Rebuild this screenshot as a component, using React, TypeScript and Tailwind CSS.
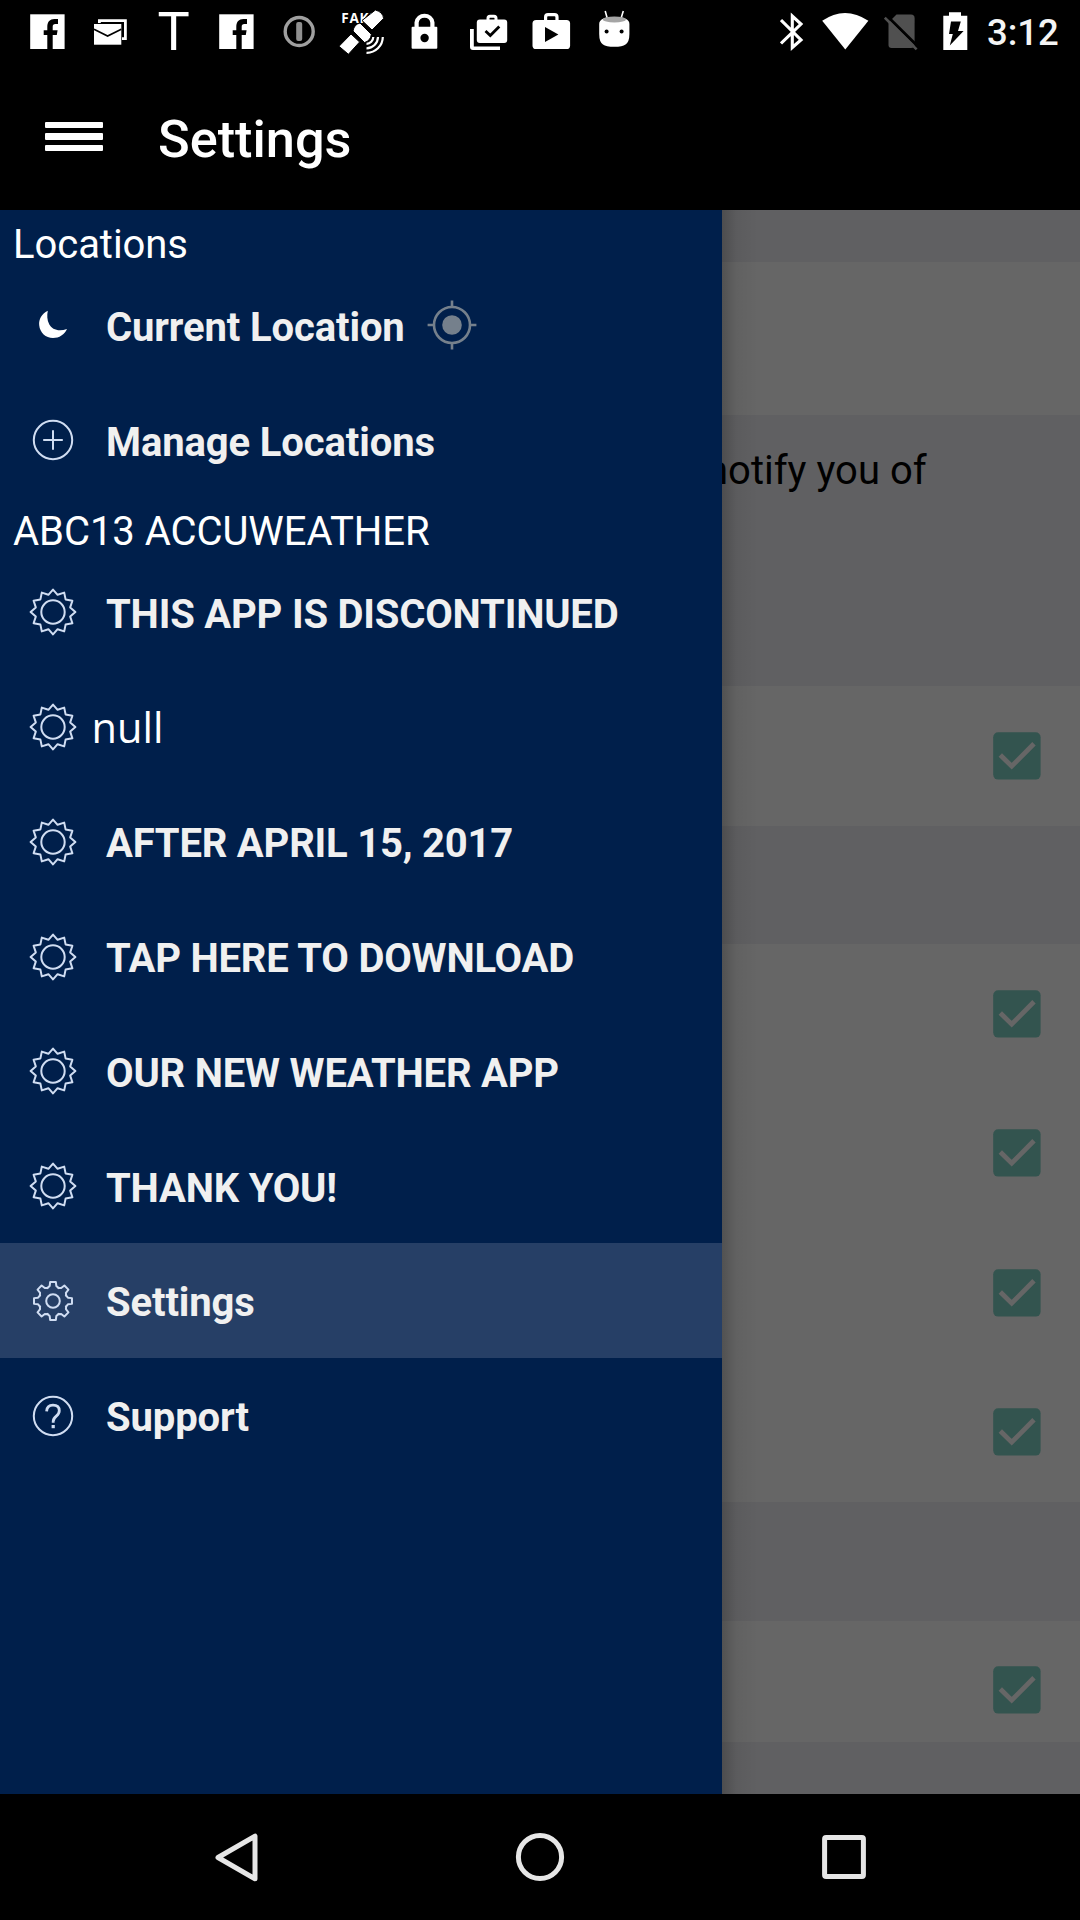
import React from "react";

type IconProps = { children: React.ReactNode; width?: number; className?: string };

function StatusIcon({ children, width = 63, className = "" }: IconProps) {
  return (
    <svg width={width} height={64} viewBox={`0 0 ${width} 64`} fill="white" className={`shrink-0 ${className}`}>
      {children}
    </svg>
  );
}

function FacebookIcon() {
  return (
    <StatusIcon>
      <rect x="14.2" y="14.3" width="34.4" height="34.7" />
      <path
        d="M31.3 49V34.9H27.7V30.2H31.3V26.6C31.3 21.8 34 19 38.3 19H42V24H39.4C37.4 24 36.7 25 36.7 26.8V30.2H41.6L40.8 34.9H36.7V49Z"
        fill="black"
      />
    </StatusIcon>
  );
}

function StatusBar() {
  return (
    <div className="flex h-16 items-start pl-4">
      <FacebookIcon />
      <StatusIcon>
        <path d="M20.4 23V20.6H46.4V38.6H43" fill="none" stroke="white" strokeWidth="2.8" />
        <rect x="15" y="24" width="27.3" height="20.7" />
        <path d="M15 29.2L28.6 36L42.3 29.2" fill="none" stroke="black" strokeWidth="1.6" />
      </StatusIcon>
      <div className="h-16 w-[63px] text-center font-[Roboto] text-[54px] leading-[63px] text-white">T</div>
      <FacebookIcon />
      <StatusIcon>
        <circle cx="31.2" cy="31.5" r="14" fill="none" stroke="#a0a0a0" strokeWidth="3.4" />
        <rect x="28.2" y="22" width="6" height="19" rx="2" fill="#909090" />
      </StatusIcon>
      <StatusIcon>
        <text x="10.2" y="22.8" fontFamily="Open Sans" fontWeight="700" fontSize="13.5" letterSpacing="0.8">FAKE</text>
        <g stroke="black" strokeWidth="1">
          <path d="M8 46.3L20 34L28.6 42L17.4 54.3Z" />
          <path d="M31 20.5L44.4 10Q52 12 52.6 18.5L41 30Z" />
          <path d="M22 31Q23 24.5 29 23L40.3 34.3Q39.8 40.5 33.5 42.6Z" />
        </g>
        <g fill="none" stroke="white" strokeWidth="2.2">
          <path d="M35.5 43.8A7 7 0 0 0 42.3 37" />
          <path d="M35.5 48.3A11.5 11.5 0 0 0 47 37" />
          <path d="M35.5 52.8A16 16 0 0 0 51.8 37" />
        </g>
      </StatusIcon>
      <StatusIcon>
        <path d="M22.6 28V22.5A8 8 0 0 1 38.4 22.5V28" fill="none" stroke="white" strokeWidth="4.2" />
        <rect x="17.6" y="26.8" width="25.7" height="22" rx="1" />
        <circle cx="30.6" cy="38" r="4.2" fill="black" />
      </StatusIcon>
      <StatusIcon>
        <path d="M13 29H16.8V46.5H43V50H16Q13 50 13 47Z" />
        <rect x="19.8" y="19.6" width="30.4" height="23.4" rx="3" />
        <path d="M31 20V18.2Q31 16.2 33 16.2H37Q39 16.2 39 18.2V20" fill="none" stroke="white" strokeWidth="3" />
        <path d="M28.5 31L33.3 35.5L42.3 26.4" fill="none" stroke="black" strokeWidth="2.8" />
      </StatusIcon>
      <StatusIcon>
        <rect x="12.5" y="20" width="37.6" height="29" rx="3.6" />
        <path d="M25.6 21V17Q25.6 14.6 28 14.6H34.5Q37 14.6 37 17V21" fill="none" stroke="white" strokeWidth="3.2" />
        <path d="M25 27V42L38.4 34.5Z" fill="black" />
      </StatusIcon>
      <StatusIcon>
        <path d="M22.2 11L24.3 18.5M40.3 11L38 18.5" stroke="white" strokeWidth="1.6" />
        <path d="M16.2 24Q16.2 17 31.3 17Q46.4 17 46.4 24V34Q46.4 42 42.5 44.5Q39.5 46.8 31.3 46.8Q23 46.8 20 44.5Q16.2 42 16.2 34Z" />
        <ellipse cx="31.4" cy="19.4" rx="11.6" ry="3" fill="#a5a5a5" />
        <circle cx="23.6" cy="31.6" r="2" fill="black" />
        <circle cx="38.6" cy="31.6" r="2" fill="black" />
      </StatusIcon>
      <StatusIcon width={25} className="ml-[134px]">
        <path d="M1 20L21 40L12.3 47.5V16L21 24L1 43.5" fill="none" stroke="white" strokeWidth="3.1" />
      </StatusIcon>
      <StatusIcon width={48} className="ml-[16px]">
        <path d="M1.2 20.8Q23.8 5.2 47.4 20.8L24.3 49.6Z" />
      </StatusIcon>
      <StatusIcon width={35} className="ml-[15px]">
        <path d="M12.5 14.5H27Q30.6 14.5 30.6 18V45Q30.6 48 27 48H7.6Q4.5 48 4.5 45V22.5Z" fill="#505050" />
        <path d="M2.5 15.5L34 46.5" stroke="black" strokeWidth="3" />
        <path d="M.8 17.6L32.6 49.3" stroke="#505050" strokeWidth="2.6" />
      </StatusIcon>
      <StatusIcon width={26} className="ml-[24px]">
        <path d="M.3 15.7H6V12.2H18V15.7H24.3V50H.3Z" />
        <path d="M8 21.5H17.8L15 31H20.6L6.8 45.5L9.8 34H6Z" fill="black" />
      </StatusIcon>
      <div className="ml-[18px] font-[Roboto] text-[36.5px] leading-[66px] font-medium text-[#f4f4f4]">3:12</div>
    </div>
  );
}

function AppBar() {
  return (
    <div className="flex h-[146px] items-center pl-[45px]">
      <div className="-mt-px flex w-[58px] flex-col gap-[5.5px]">
        <div className="h-[6.3px] rounded-[1px] bg-white" />
        <div className="h-[6.3px] rounded-[1px] bg-white" />
        <div className="h-[6.3px] rounded-[1px] bg-white" />
      </div>
      <div className="mt-[4px] ml-[55px] text-[52.3px] leading-none font-medium text-white">Settings</div>
    </div>
  );
}

const sunPoints = Array.from({ length: 24 }, (_, i) => {
  const r = i % 2 === 0 ? 22.4 : 17.8;
  const a = (i * Math.PI) / 12;
  return `${(26 + r * Math.sin(a)).toFixed(2)},${(26 - r * Math.cos(a)).toFixed(2)}`;
}).join(" ");

const gearPoints = Array.from({ length: 8 }, (_, i) => {
  const base = (i * 45 * Math.PI) / 180;
  return [
    [-0.42, 14.1],
    [-0.22, 15.3],
    [-0.15, 19.2],
    [0.15, 19.2],
    [0.22, 15.3],
    [0.42, 14.1],
  ]
    .map(([o, r]) => `${(26 + r * Math.sin(base + o)).toFixed(2)},${(26 - r * Math.cos(base + o)).toFixed(2)}`)
    .join(" ");
}).join(" ");

function RowIcon({ kind }: { kind: string }) {
  return (
    <svg width={52} height={52} viewBox="0 0 52 52" fill="none" stroke="#d0ddf2" strokeWidth="2" strokeLinejoin="round" className="mt-[1px] shrink-0">
      {kind === "sun" && (
        <>
          <polygon points={sunPoints} />
          <circle cx="26" cy="26" r="11.7" />
        </>
      )}
      {kind === "gear" && (
        <>
          <polygon points={gearPoints} />
          <circle cx="26" cy="26" r="6.8" />
        </>
      )}
      {kind === "plus" && (
        <>
          <circle cx="26" cy="26" r="19.2" />
          <path d="M26 16.2V35.8M16.2 26H35.8" />
        </>
      )}
      {kind === "help" && (
        <>
          <circle cx="26" cy="26" r="19.2" />
          <path d="M19.6 21.4Q19.9 15.2 26 15.2Q32.3 15.2 32.3 20.8Q32.3 23.6 29.3 26.1Q26.2 28.6 26.2 31.5V32.8" strokeWidth="2.8" />
          <rect x="24.6" y="35" width="3.2" height="3.2" fill="#d0ddf2" stroke="none" />
        </>
      )}
      {kind === "moon" && (
        <path
          d="M20.8 11.8C14.5 15 11.6 20.4 12.2 26.2C12.9 33.6 18.7 39 26 39C32.2 39 37.6 35.6 40 30C31.5 32.8 25 30.6 22.2 25.2C20 21 19.9 16.4 20.8 11.8Z"
          fill="white"
          stroke="none"
        />
      )}
    </svg>
  );
}

function Row({ kind, label, active = false, target = false }: { kind: string; label: string; active?: boolean; target?: boolean }) {
  const tracking = label === label.toUpperCase() ? "tracking-[-0.2px]" : "tracking-[-0.12px]";
  return (
    <div className={`flex h-[114.75px] shrink-0 items-center pl-[27px] ${active ? "bg-[#263f66]" : ""}`}>
      <RowIcon kind={kind} />
      <span className={`mt-[6px] ml-[27px] text-[40px] leading-[48px] font-bold whitespace-nowrap text-[#f0f0f0] ${tracking}`}>{label}</span>
      {target && (
        <svg width={50} height={50} viewBox="0 0 50 50" className="mt-[1px] ml-[22px]" fill="none" stroke="#75808c" strokeWidth="2.6">
          <circle cx="25" cy="25" r="18" />
          <circle cx="25" cy="25" r="9.8" fill="#75808c" stroke="none" />
          <path d="M25 .6V7M25 43V49.4M.6 25H7M43 25H49.4" />
        </svg>
      )}
    </div>
  );
}

function Heading({ children }: { children: React.ReactNode }) {
  return (
    <div className="h-[57.5px] shrink-0 pt-[11px] pl-[13px] text-[40px] leading-[48px] tracking-[-0.05px] whitespace-nowrap text-white">
      {children}
    </div>
  );
}

function Drawer() {
  return (
    <div className="absolute inset-y-0 left-0 flex w-[722px] flex-col bg-[#001f4b]">
      <Heading>Locations</Heading>
      <Row kind="moon" label="Current Location" target />
      <Row kind="plus" label="Manage Locations" />
      <Heading>ABC13 ACCUWEATHER</Heading>
      <Row kind="sun" label="THIS APP IS DISCONTINUED" />
      <div className="flex h-[114.75px] shrink-0 items-center pl-[27px]">
        <RowIcon kind="sun" />
        <span className="ml-[12.5px] font-['Open_Sans'] text-[41.5px] leading-[48px] font-medium text-white">null</span>
      </div>
      <Row kind="sun" label="AFTER APRIL 15, 2017" />
      <Row kind="sun" label="TAP HERE TO DOWNLOAD" />
      <Row kind="sun" label="OUR NEW WEATHER APP" />
      <Row kind="sun" label="THANK YOU!" />
      <Row kind="gear" label="Settings" active />
      <Row kind="help" label="Support" />
    </div>
  );
}

function Checkbox() {
  return (
    <svg width={48} height={48} viewBox="0 0 48 48" className="mr-[39px] shrink-0">
      <rect x=".2" y=".2" width="47.4" height="47.4" rx="5" fill="#33544f" />
      <path d="M7.3 23L18.7 34.2L41 11.8" fill="none" stroke="#666666" strokeWidth="4.8" />
    </svg>
  );
}

function SettingsPage() {
  return (
    <div className="flex h-full flex-col bg-[#606062]">
      <div className="mt-[52px] h-[153px] bg-[#666666]" />
      <div className="h-[271px] pt-[32px] pl-[706px] text-[40px] leading-[48px] whitespace-nowrap text-black">notify you of</div>
      <div className="flex h-[140px] items-center justify-end bg-[#666666]">
        <Checkbox />
      </div>
      <div className="mt-[118px] flex h-[558px] flex-col bg-[#666666]">
        {[0, 1, 2, 3].map((i) => (
          <div key={i} className="flex h-[139.5px] items-center justify-end">
            <Checkbox />
          </div>
        ))}
      </div>
      <div className="mt-[119px] flex h-[121px] items-start justify-end bg-[#666666] pt-[45px]">
        <Checkbox />
      </div>
    </div>
  );
}

export default function App() {
  return (
    <div className="flex h-[1920px] w-[1080px] flex-col overflow-hidden bg-black font-[Roboto,sans-serif]">
      <StatusBar />
      <AppBar />
      <div className="relative h-[1584px] overflow-hidden">
        <SettingsPage />
        <div className="absolute inset-y-0 left-[722px] w-9 bg-linear-to-r from-black/20 via-black/5 via-40% to-transparent" />
        <Drawer />
      </div>
      <div className="flex h-[126px] items-center justify-between pr-[211px] pl-[213px]">
        <svg width={50} height={54} viewBox="0 0 50 54" fill="none" stroke="#e6e6e6" strokeWidth="5" strokeLinejoin="round" className="mt-px">
          <path d="M42 5.2V47.8L5 26.5Z" />
        </svg>
        <svg width={50} height={50} viewBox="0 0 50 50" fill="none" stroke="#e6e6e6" strokeWidth="5" className="mr-[2px]">
          <circle cx="25" cy="25" r="21.6" />
        </svg>
        <svg width={50} height={50} viewBox="0 0 50 50" fill="none" stroke="#e6e6e6" strokeWidth="5">
          <rect x="5.6" y="5.6" width="38.8" height="38.8" rx="1.5" />
        </svg>
      </div>
    </div>
  );
}
